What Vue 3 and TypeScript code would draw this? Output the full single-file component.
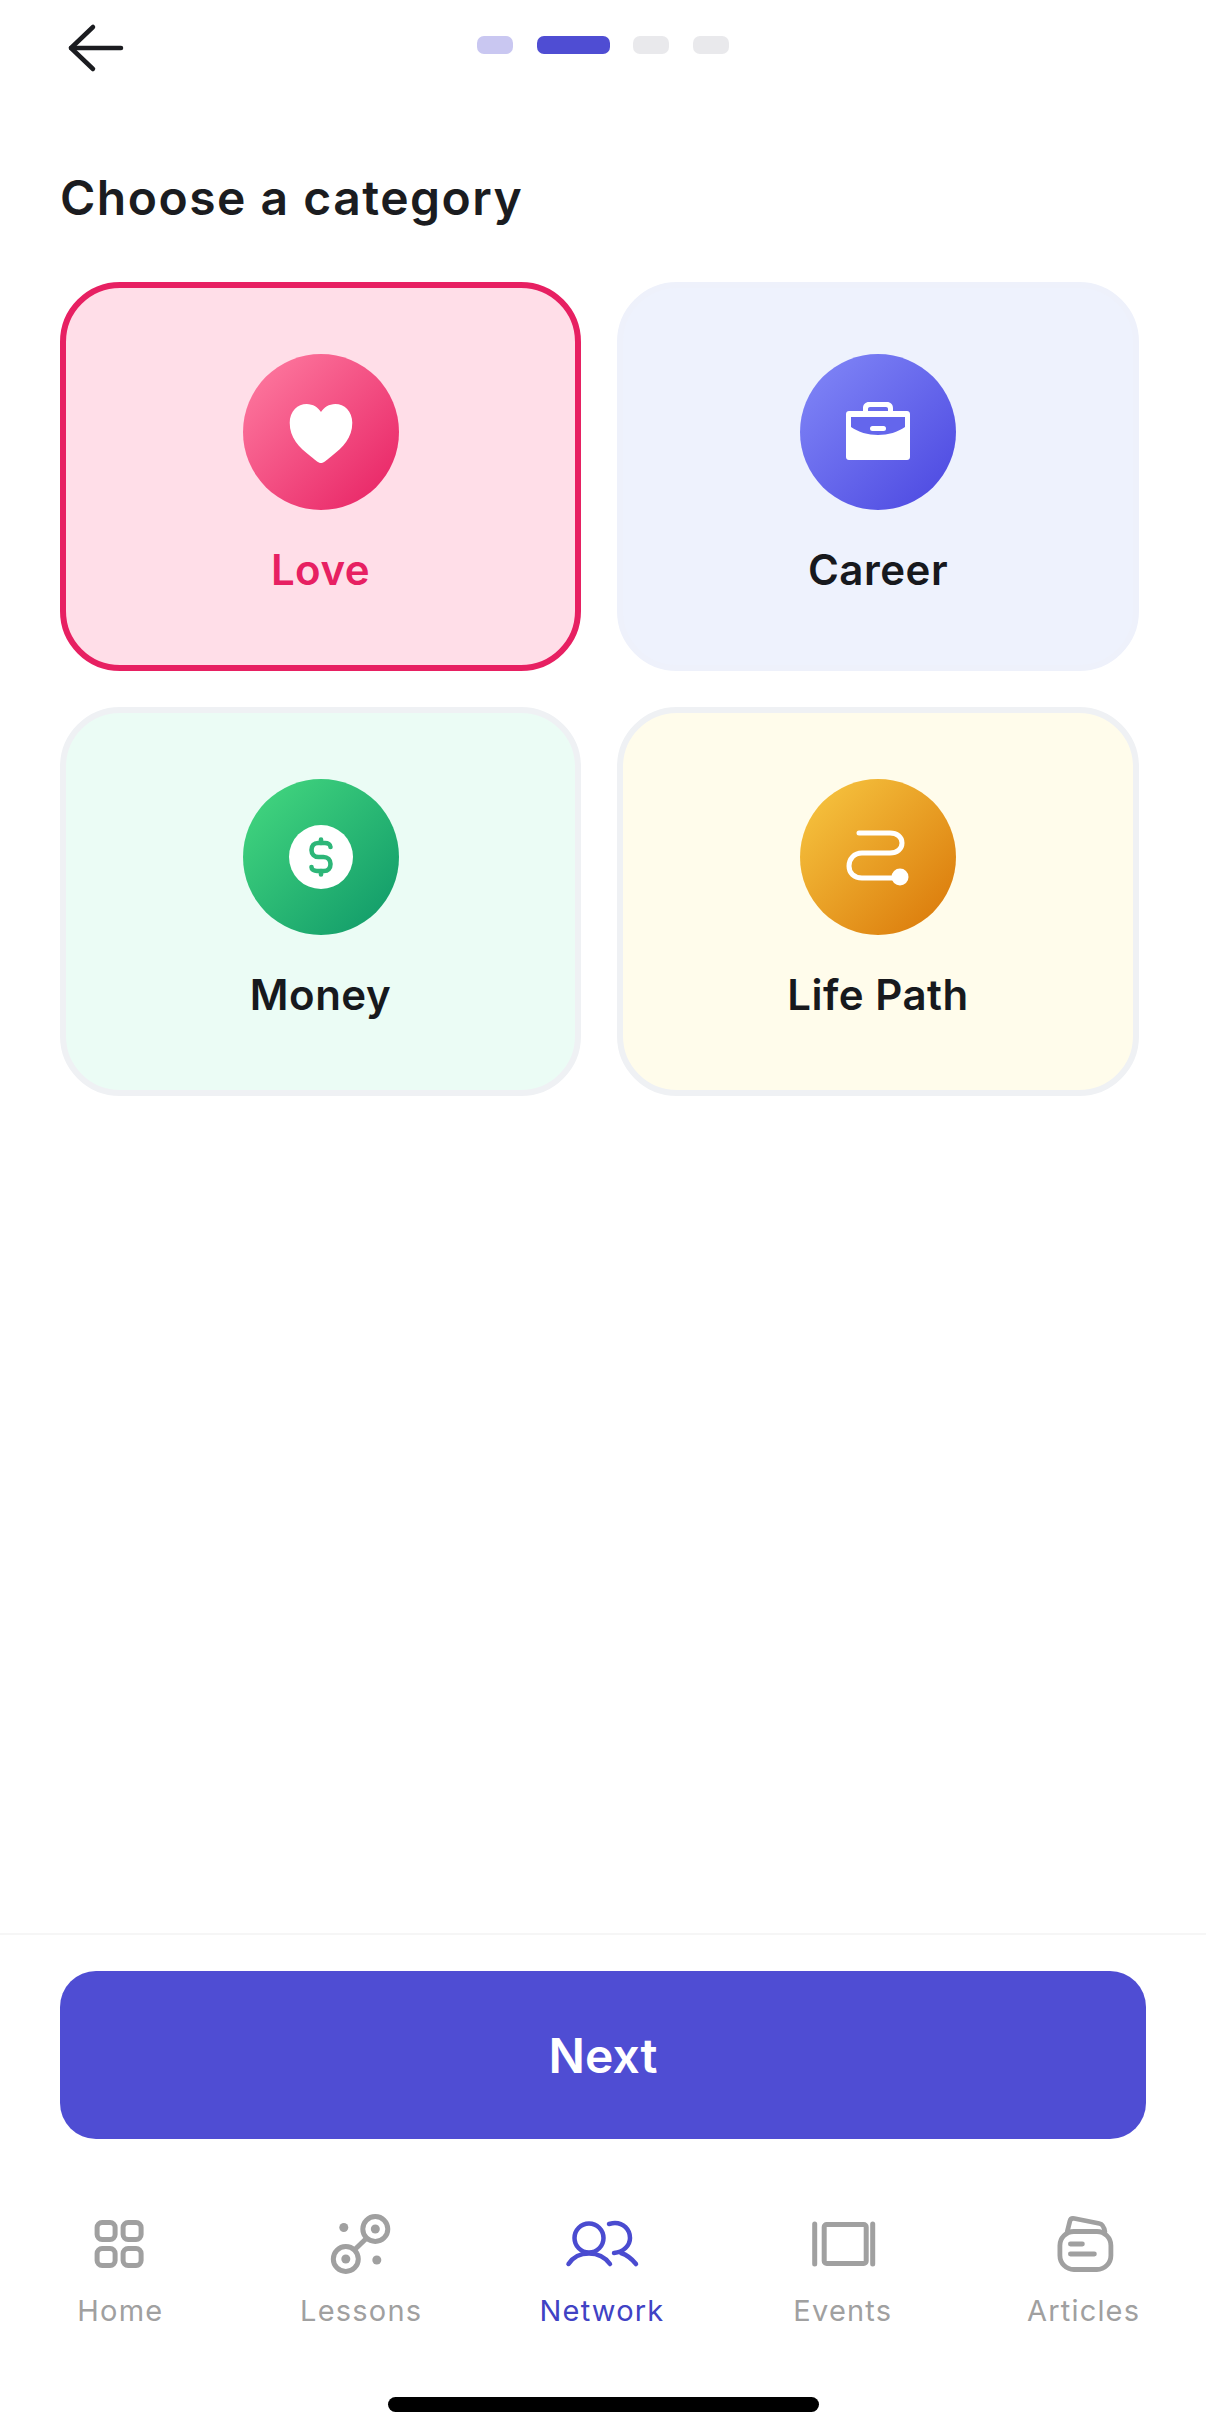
<script setup lang="ts">
const title: string = 'Choose a category'
</script>

<template>
  <div class="screen">
    <header class="top">
      <svg class="back" viewBox="60 20 70 56" fill="none" stroke="#1b1c20" stroke-width="4.5" stroke-linecap="round" stroke-linejoin="round">
        <path d="M93 27 L71 48 L93 69" />
        <path d="M71 48 H121" />
      </svg>
      <div class="steps">
        <span class="step done"></span>
        <span class="step current"></span>
        <span class="step"></span>
        <span class="step"></span>
      </div>
    </header>

    <main class="content">
      <h1>{{ title }}</h1>
      <div class="grid">
        <button class="card love">
          <span class="disc">
            <svg viewBox="5 4 70 66" class="ico-heart"><path fill="#fff" d="M40 70 C37 70 34 67 29 63 C15 52 5 42 5 25 C5 12 14 4 24 4 C31 4 37 8 40 13 C43 8 49 4 56 4 C66 4 75 12 75 25 C75 42 65 52 51 63 C46 67 43 70 40 70 Z"/></svg>
          </span>
          <span class="label">Love</span>
        </button>
        <button class="card career">
          <span class="disc">
            <svg viewBox="0 0 64 58" class="ico-case">
              <path fill="#fff" d="M17 9 V6 C17 2.500 19.500 0 23 0 H41 C44.500 0 47 2.500 47 6 V9 H61 C62.700 9 64 10.300 64 12 V55 C64 56.700 62.700 58 61 58 H3 C1.300 58 0 56.700 0 55 V12 C0 10.300 1.300 9 3 9 Z M22 9 H42 V7 C42 5.800 41.200 5 40 5 H24 C22.800 5 22 5.800 22 7 Z"/>
              <path fill="#6466ec" d="M5 15 H59 V25 C52 30 42 33 32 33 C22 33 12 30 5 25 Z"/>
              <rect fill="#fff" x="24" y="24" width="16" height="5" rx="2.500"/>
            </svg>
          </span>
          <span class="label">Career</span>
        </button>
        <button class="card money">
          <span class="disc">
            <span class="coin">
              <svg viewBox="0 0 26 40" class="ico-dollar" fill="none" stroke="#2db678" stroke-width="4.600" stroke-linecap="round">
                <path d="M22.500 10 C22.500 7.500 20 6 17 6 H10 C6 6 3.500 8.500 3.500 13 C3.500 17 6.500 20 10.500 20 H15.500 C19.500 20 22.500 23 22.500 27 C22.500 31.500 20 34 16 34 H9 C6 34 3.500 32.500 3.500 30"/>
                <path d="M13 2.500 V6 M13 34 V37.500"/>
              </svg>
            </span>
          </span>
          <span class="label">Money</span>
        </button>
        <button class="card path">
          <span class="disc">
            <svg viewBox="846 832 64 56" class="ico-path" fill="none" stroke="#fff" stroke-width="5" stroke-linecap="round">
              <path d="M859 835 H890 C897 835 902 839 902 845 C902 851 897 855 890 855 H862 C854 855 849 861 849 868 C849 875 854 880 862 880 H900"/>
              <circle cx="900" cy="879" r="8.500" fill="#fff" stroke="none"/>
            </svg>
          </span>
          <span class="label">Life Path</span>
        </button>
      </div>
    </main>

    <section class="action">
      <button class="next">Next</button>
    </section>

    <nav class="tabs">
      <div class="tab">
        <svg class="tab-ico" viewBox="80.400 2212 80 64" fill="none" stroke="#a0a0a0" stroke-width="5">
          <rect x="97.500" y="2222.500" width="18" height="17" rx="5"/>
          <rect x="123.500" y="2222.500" width="18" height="17" rx="5"/>
          <rect x="97.500" y="2248.500" width="18" height="17" rx="5"/>
          <rect x="123.500" y="2248.500" width="18" height="17" rx="5"/>
        </svg>
        <span>Home</span>
      </div>
      <div class="tab">
        <svg class="tab-ico" viewBox="321.200 2212 80 64" fill="none" stroke="#a0a0a0" stroke-width="5">
          <circle cx="375.500" cy="2229" r="12.500"/>
          <circle cx="346" cy="2259" r="12.500"/>
          <path d="M354.500 2250 L367 2238"/>
          <g fill="#a0a0a0" stroke="none">
            <circle cx="375.500" cy="2229" r="4.500"/>
            <circle cx="346" cy="2259" r="4.500"/>
            <circle cx="344" cy="2227.500" r="4.500"/>
            <circle cx="377" cy="2260" r="4.500"/>
          </g>
        </svg>
        <span>Lessons</span>
      </div>
      <div class="tab active">
        <svg class="tab-ico" viewBox="562 2212 80 64" fill="none" stroke="#4a4bd0" stroke-width="4.500" stroke-linecap="round">
          <circle cx="589" cy="2238" r="14.500"/>
          <path d="M568.500 2264 C573 2257 580 2253.500 589 2253.500 C598 2253.500 605 2257 610 2264"/>
          <path d="M609 2224 C611 2223.500 613 2223 615 2223 C623 2223 630 2229 630 2238 C630 2246 623 2252 614 2253"/>
          <path d="M621 2253 C627 2255 632 2259 636 2264"/>
        </svg>
        <span>Network</span>
      </div>
      <div class="tab">
        <svg class="tab-ico" viewBox="802.800 2212 80 64" fill="none" stroke="#a0a0a0" stroke-width="5" stroke-linecap="round">
          <rect x="824" y="2224.500" width="42" height="39" rx="2.500"/>
          <path d="M814.500 2224 V2264 M872.500 2224 V2264"/>
        </svg>
        <span>Events</span>
      </div>
      <div class="tab">
        <svg class="tab-ico" viewBox="1043.600 2212 80 64" fill="none" stroke="#a0a0a0" stroke-width="4.800" stroke-linecap="round" stroke-linejoin="round">
          <rect x="1059.500" y="2231.500" width="51" height="38" rx="14"/>
          <path d="M1067 2231 L1069.500 2221 C1070 2219 1071.500 2218 1074 2218.500 L1099 2223.500 C1102 2224 1103.500 2226 1104.500 2232"/>
          <path d="M1070 2244 H1082 M1070 2254 H1094"/>
        </svg>
        <span>Articles</span>
      </div>
    </nav>

    <div class="home-bar"><i></i></div>
  </div>
</template>

<style>
html, body { margin: 0; background: #fff; }
</style>

<style scoped>
.screen {
  width: 1206px;
  height: 2436px;
  display: flex;
  flex-direction: column;
  background: #fff;
  font-family: Inter, "Liberation Sans", sans-serif;
  overflow: hidden;
}
.top {
  height: 108px;
  display: grid;
  grid-template-columns: 1fr auto 1fr;
  padding: 20px 60px 0;
  box-sizing: border-box;
  align-items: start;
}
.back { width: 70px; height: 56px; }
.steps { display: flex; gap: 23.700px; margin-top: 16px; }
.step { width: 36px; height: 18px; border-radius: 7px; background: #e9e9ec; }
.step.done { background: #c9c7f1; }
.step.current { width: 73px; background: #4f4dd3; }
.content { flex: 1; padding: 0 60px; }
h1 {
  margin: 60px 0 54px;
  font-size: 48px;
  line-height: 60px;
  font-weight: 600;
  letter-spacing: 1.500px;
  color: #1b1c20;
}
.grid {
  display: grid;
  grid-template-columns: 521px 522px;
  grid-auto-rows: 389px;
  gap: 36px;
}
.card {
  box-sizing: border-box;
  display: flex;
  flex-direction: column;
  align-items: center;
  padding: 66px 0 0;
  border: 6px solid #eff1f4;
  border-radius: 60px;
  font-family: inherit;
}
.love { background: #ffdee8; border-color: #e72062; }
.career { background: #eef2fd; border-color: #eef1fb; }
.money { background: #ebfcf5; }
.path { background: #fffceb; }
.disc {
  width: 156px;
  height: 156px;
  border-radius: 50%;
  display: flex;
  align-items: center;
  justify-content: center;
}
.love .disc { background: linear-gradient(135deg, #ff7fa3, #e71f62); }
.career .disc { background: linear-gradient(135deg, #8389f8, #4a46e0); }
.money .disc { background: linear-gradient(135deg, #46da80, #0e9768); }
.path .disc { background: linear-gradient(135deg, #f8c943, #d97507); }
.ico-heart { width: 70px; height: 59px; margin-top: 2px; }
.ico-case { width: 64px; height: 58px; margin-top: -2px; }
.coin {
  width: 64px;
  height: 64px;
  border-radius: 50%;
  background: #fff;
  display: flex;
  align-items: center;
  justify-content: center;
}
.ico-dollar { width: 28px; height: 40px; }
.ico-path { width: 64px; height: 56px; margin-top: 2px; }
.label {
  margin-top: 35px;
  font-size: 42px;
  line-height: 50px;
  font-weight: 600;
  letter-spacing: 0.500px;
  color: #17191d;
}
.love .label { color: #e72062; }
.action {
  border-top: 2px solid #f6f6f6;
  padding: 36px 60px 0;
}
.next {
  display: block;
  width: 1086px;
  height: 168px;
  border: 0;
  border-radius: 36px;
  background: #4f4dd3;
  color: #fff;
  font-family: inherit;
  font-size: 48px;
  font-weight: 600;
}
.tabs {
  display: grid;
  grid-template-columns: repeat(5, 240.800px);
  margin-top: 73px;
}
.tab {
  display: flex;
  flex-direction: column;
  align-items: center;
  font-size: 29px;
  line-height: 36px;
  letter-spacing: 1.200px;
  color: #a0a0a0;
}
.tab.active { color: #4042c4; }
.tab-ico { width: 80px; height: 64px; margin-bottom: 17px; }
.home-bar { display: flex; justify-content: center; margin-top: 68px; padding-bottom: 24px; }
.home-bar i { display: block; width: 431px; height: 15px; border-radius: 8px; background: #000; }
</style>
